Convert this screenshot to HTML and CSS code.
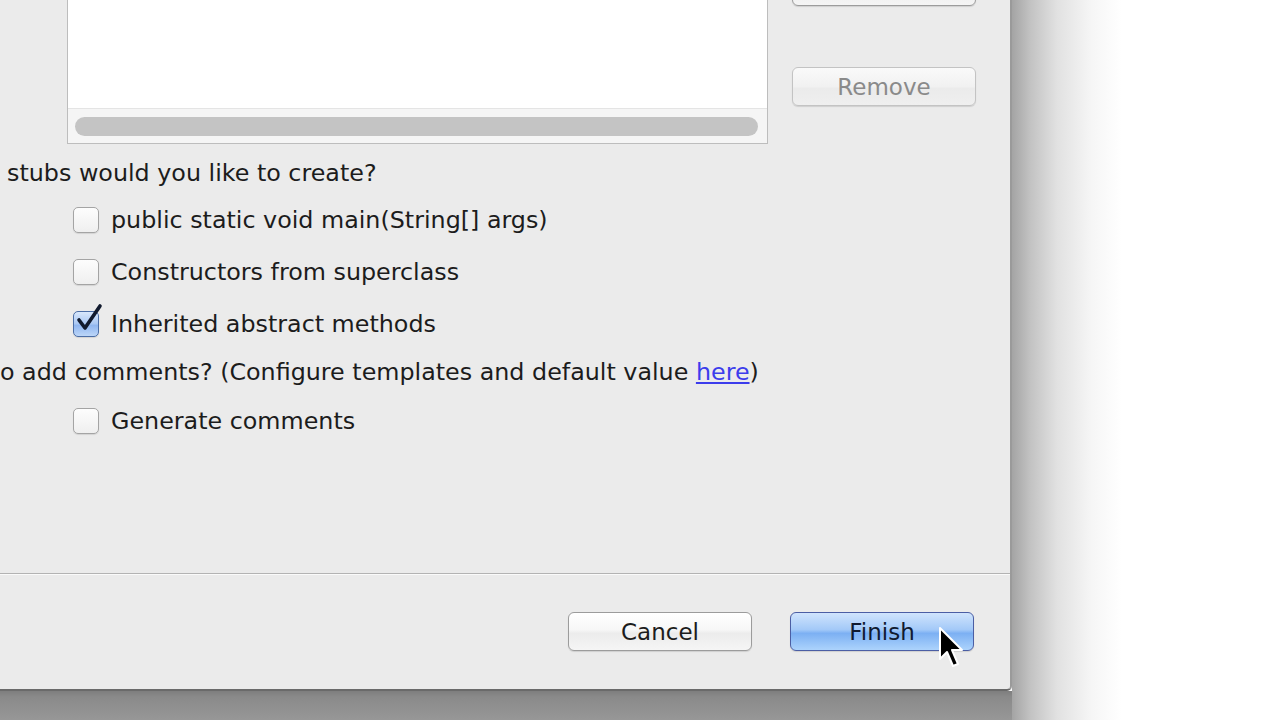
FILE: index.html
```html
<!DOCTYPE html>
<html>
<head>
<meta charset="utf-8">
<link rel="stylesheet" href="styles.css">
</head>
<body>
<div class="screen">
  <div class="left-col">
    <div class="dialog">
      <div class="content">
        <div class="top-section">
          <div class="table">
            <div class="table-body"></div>
            <div class="hscroll"><div class="thumb"></div></div>
          </div>
          <div class="side-buttons">
            <button class="btn btn-cut"></button>
            <button class="btn btn-disabled">Remove</button>
          </div>
        </div>
        <div class="label label-stubs">stubs would you like to create?</div>
        <div class="checks checks-first">
          <div class="check-row"><span class="cb"></span><span>public static void main(String[] args)</span></div>
          <div class="check-row"><span class="cb"></span><span>Constructors from superclass</span></div>
          <div class="check-row"><span class="cb cb-on"><svg class="tick" viewBox="0 0 30 32" width="30" height="32"><path d="M6 17 L12 25 L27 3" fill="none" stroke="#111a2e" stroke-width="3.6" stroke-linecap="round" stroke-linejoin="round"/></svg></span><span>Inherited abstract methods</span></div>
        </div>
        <div class="label label-comments">o add comments? (Configure templates and default value <a class="link">here</a>)</div>
        <div class="checks checks-second">
          <div class="check-row"><span class="cb"></span><span>Generate comments</span></div>
        </div>
      </div>
      <div class="footer">
        <button class="btn btn-cancel">Cancel</button>
        <button class="btn btn-default">Finish</button>
        <svg class="cursor" viewBox="0 0 26 44" width="26" height="44"><path d="M2 2 L2 33 L9 26 L15 40 L20 38 L14 24 L24 24 Z" fill="#000" stroke="#fff" stroke-width="2" stroke-linejoin="round"/></svg>
      </div>
    </div>
    <div class="under"></div>
  </div>
  <div class="right-shadow"></div>
</div>
</body>
</html>
```
FILE: styles.css
```css
* { box-sizing: border-box; }
html, body { margin: 0; padding: 0; }
body {
  width: 1280px;
  height: 720px;
  overflow: hidden;
  background: #fff;
  font-family: "DejaVu Sans", "Liberation Sans", sans-serif;
  color: #1c1c1c;
}
.screen { display: flex; height: 720px; }
.left-col { width: 1012px; display: flex; flex-direction: column; }
.dialog {
  height: 691px;
  background: #ebebeb;
  border-right: 2px solid #9a9a9a;
  border-bottom: 2px solid #6a6a6a;
  border-bottom-right-radius: 5px;
  display: flex;
  flex-direction: column;
  position: relative;
}
.under {
  flex: 1;
  background: linear-gradient(#7e7e7e, #8a8a8a 6px, #979797);
}
.right-shadow {
  flex: 1;
  background: linear-gradient(to right, #a4a4a4 0, #c2c2c2 18px, #e1e1e1 45px, #f6f6f6 80px, #fff 110px);
}
.content { flex: 1; font-size: 23.8px; }
.top-section { display: flex; height: 144px; }
.table {
  margin-left: 67px;
  width: 701px;
  border: 1px solid #bdbdbd;
  border-top: none;
  background: #fff;
  display: flex;
  flex-direction: column;
}
.table-body { height: 108px; }
.hscroll {
  flex: 1;
  background: #f5f5f5;
  border-top: 1px solid #e4e4e4;
  padding: 8px 9px 0 7px;
}
.thumb { height: 19px; border-radius: 10px; background: #c4c4c4; }
.side-buttons { margin-left: 24px; display: flex; flex-direction: column; }
.btn {
  font-family: inherit;
  font-size: 23px;
  height: 39px;
  width: 184px;
  border: 1px solid #9c9c9c;
  border-radius: 6px;
  background: linear-gradient(#fff, #f7f7f7 45%, #ececec 55%, #f5f5f5);
  color: #1c1c1c;
  padding: 0;
  box-shadow: 0 1px 1px rgba(0,0,0,0.12);
}
.btn-cut { margin-top: -33px; flex: none; }
.btn-disabled {
  margin-top: 61px;
  color: #8a8a8a;
  border-color: #c3c3c3;
  background: linear-gradient(#fafafa, #f1f1f1 50%, #ebebeb 55%, #efefef);
  flex: none;
}
.label { white-space: nowrap; height: 30px; line-height: 30px; }
.label-stubs { margin-top: 14px; margin-left: 7px; }
.label-comments { margin-top: 7px; }
.link { color: #3c3cec; text-decoration: underline; }
.checks { display: flex; flex-direction: column; padding-left: 73px; }
.checks-first { padding-top: 6px; }
.checks-second { padding-top: 8px; }
.check-row { display: flex; align-items: center; height: 52px; gap: 12px; white-space: nowrap; }
.cb {
  width: 26px; height: 26px;
  border: 1px solid #a4a4a4;
  border-radius: 5px;
  background: linear-gradient(#fdfdfd, #efefef);
  box-shadow: 0 1px 1px rgba(0,0,0,0.1);
  position: relative;
  flex: none;
}
.cb-on {
  border-color: #4c6ea6;
  background: linear-gradient(#d9e8fc, #a9c7f3 50%, #90b6f0 55%, #bcd6f8);
}
.tick { position: absolute; left: -1px; top: -9px; }
.footer {
  height: 116px;
  border-top: 1px solid #b3b3b3;
  box-shadow: inset 0 1px 0 #fafafa;
  display: flex;
  align-items: flex-start;
  padding-top: 38px;
  padding-left: 568px;
  gap: 38px;
  position: relative;
}
.btn-default {
  border-color: #4b5ea4;
  color: #101a30;
  background: linear-gradient(#d0e4fd, #a3c9f8 45%, #7cb0f3 55%, #acd3fc);
}
.cursor { position: absolute; left: 938px; top: 52px; }
```
